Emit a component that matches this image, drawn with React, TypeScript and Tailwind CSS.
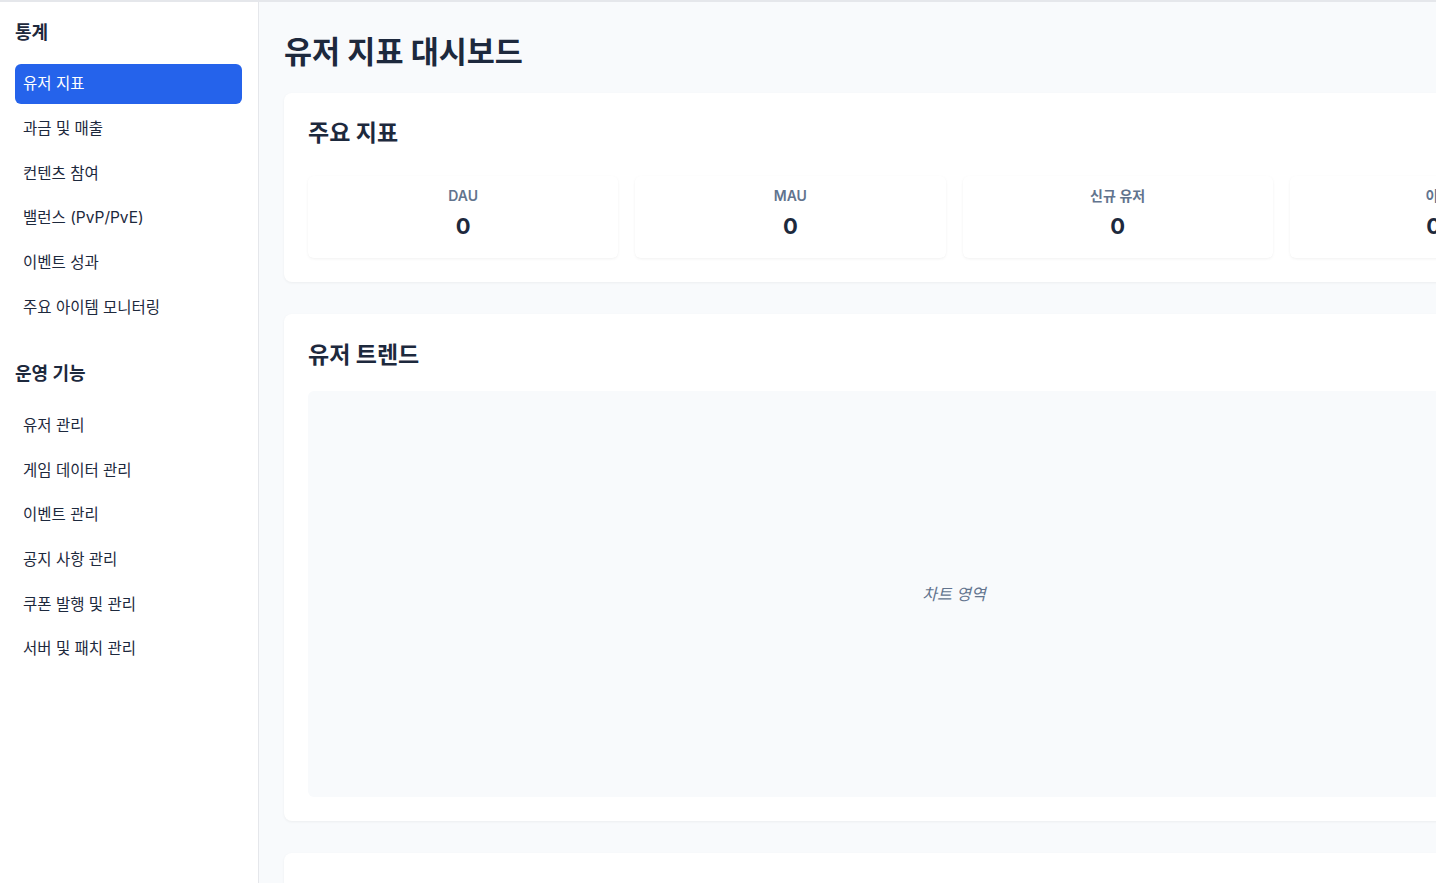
const STATS_MENU = [
  "유저 지표",
  "과금 및 매출",
  "컨텐츠 참여",
  "밸런스 (PvP/PvE)",
  "이벤트 성과",
  "주요 아이템 모니터링",
];

const OPS_MENU = [
  "유저 관리",
  "게임 데이터 관리",
  "이벤트 관리",
  "공지 사항 관리",
  "쿠폰 발행 및 관리",
  "서버 및 패치 관리",
];

const KPIS = [
  { label: "DAU", value: "0" },
  { label: "MAU", value: "0" },
  { label: "신규 유저", value: "0" },
  { label: "이탈률", value: "0%" },
];

function NavSection({ title, items, active }: { title: string; items: string[]; active?: string }) {
  return (
    <div>
      <h2 className="text-[18px] leading-7 font-bold text-slate-800 mb-[17px]">{title}</h2>
      <ul className="flex flex-col gap-[4.7px]">
        {items.map((item) => (
          <li
            key={item}
            className={
              item === active
                ? "h-10 flex items-center px-2 rounded-md bg-[#2563eb] text-white text-[15.5px]"
                : "h-10 flex items-center px-2 rounded-md text-slate-800 text-[15.5px]"
            }
          >
            {item}
          </li>
        ))}
      </ul>
    </div>
  );
}

export default function App() {
  return (
    <div
      className="h-screen w-screen overflow-hidden flex border-t-2 border-gray-200 bg-white"
      style={{ fontFamily: 'Inter, "Noto Sans CJK KR", "Noto Sans", sans-serif' }}
    >
      {/* Sidebar */}
      <aside className="w-[259px] shrink-0 border-r border-gray-200 bg-white pl-[15px] pr-4 pt-[17px] flex flex-col gap-[33px]">
        <NavSection title="통계" items={STATS_MENU} active="유저 지표" />
        <NavSection title="운영 기능" items={OPS_MENU} />
      </aside>

      {/* Main */}
      <main className="flex-1 bg-[#f8fafc] pl-[25px] pt-[26px] overflow-hidden">
        <div className="w-[1340px]">
          <h1 className="text-[30.5px] leading-[48px] font-bold text-slate-800 mb-[17px]">유저 지표 대시보드</h1>

          <section className="bg-white rounded-lg shadow-[0_1px_3px_rgba(0,0,0,0.05)] p-6">
            <h2 className="text-[23px] leading-8 font-bold text-slate-800 mb-[27px]">주요 지표</h2>
            <div className="grid grid-cols-4 gap-[17px]">
              {KPIS.map((kpi) => (
                <div
                  key={kpi.label}
                  className="bg-white rounded-md shadow-[0_1px_3px_rgba(0,0,0,0.06)] pt-[10px] pb-4 flex flex-col items-center gap-1"
                >
                  <span className="text-sm leading-5 font-semibold text-slate-500">{kpi.label}</span>
                  <span className="text-[22px] leading-8 font-bold text-slate-800">{kpi.value}</span>
                </div>
              ))}
            </div>
          </section>

          <section className="bg-white rounded-lg shadow-[0_1px_3px_rgba(0,0,0,0.05)] px-6 pt-[25px] pb-6 mt-8">
            <h2 className="text-[23px] leading-8 font-bold text-slate-800 mb-[20px]">유저 트렌드</h2>
            <div className="h-[406px] rounded-md bg-[#f8fafc] flex items-center justify-center">
              <span className="italic text-slate-500 text-base">차트 영역</span>
            </div>
          </section>

          <section className="bg-white rounded-lg shadow-[0_1px_3px_rgba(0,0,0,0.05)] p-6 mt-8 h-[300px]" />
        </div>
      </main>
    </div>
  );
}
